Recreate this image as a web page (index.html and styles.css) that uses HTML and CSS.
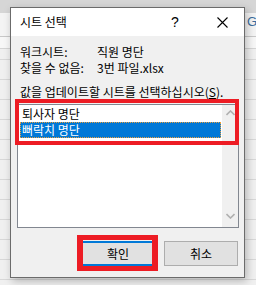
FILE: index.html
```html
<!DOCTYPE html>
<html>
<head>
    <title>시트 선택</title>
    <link rel="stylesheet" href="styles.css">
</head>
<body>
    <div class="sheet-col">G</div>
    <div class="dialog">
        <div class="title-bar">
            <span class="title">시트 선택</span>
            <span class="help">?</span>
            <span class="close">
                <svg width="11" height="11" viewBox="0 0 11 11"><path d="M0.5 0.5L10.5 10.5M10.5 0.5L0.5 10.5" stroke="#000" stroke-width="1.1" fill="none"/></svg>
            </span>
        </div>
        <div class="content">
            <div class="info">
                <span>워크시트:</span><span>직원 명단</span>
                <span>찾을 수 없음:</span><span>3번 파일.xlsx</span>
            </div>
            <div class="prompt">값을 업데이트할 시트를 선택하십시오(<u>S</u>).</div>
            <div class="list-area">
                <div class="list">
                    <ul class="items">
                        <li class="item">퇴사자 명단</li>
                        <li class="item selected">뻐락치 명단</li>
                    </ul>
                    <div class="scrollbar">
                        <svg width="9" height="6" viewBox="0 0 9 6"><path d="M0.5 5L4.5 1L8.5 5" stroke="#b0b0b0" stroke-width="1.6" fill="none"/></svg>
                        <svg width="9" height="6" viewBox="0 0 9 6"><path d="M0.5 1L4.5 5L8.5 1" stroke="#b0b0b0" stroke-width="1.6" fill="none"/></svg>
                    </div>
                </div>
                <div class="mark list-mark"></div>
            </div>
            <div class="buttons">
                <div class="ok-wrap">
                    <button class="btn btn-default">확인</button>
                    <div class="mark ok-mark"></div>
                </div>
                <button class="btn">취소</button>
            </div>
        </div>
    </div>
</body>
</html>
```

FILE: styles.css
```css
body {
    margin: 0;
    width: 256px;
    height: 285px;
    overflow: hidden;
    position: relative;
    font-family: "Noto Sans CJK KR", "Noto Sans", sans-serif;
    font-size: 12px;
    color: #000000;
    background:
        linear-gradient(#d6d6d6 0, #d6d6d6 13px, #f4f4f4 13px, #f4f4f4 36px, #c8c8c8 36px, #c8c8c8 37px, #f7f7f7 37px, #f7f7f7 48px, #d4d4d4 48px, #d4d4d4 49px, transparent 49px),
        repeating-linear-gradient(#f0f0f0 0, #f0f0f0 19px, #d8d8d8 19px, #d8d8d8 20px);
}
.sheet-col {
    position: absolute;
    left: 247px;
    top: 14px;
    color: #3b6e9e;
    font-family: "Liberation Sans", sans-serif;
    font-size: 13px;
}
.dialog {
    position: relative;
    margin: 7px 0 0 10px;
    width: 233px;
    height: 269px;
    border: 1px solid #6b6b6b;
    background-color: #f0f0f0;
    box-shadow: 2px 3px 8px rgba(0, 0, 0, 0.25);
}
.title-bar {
    height: 28px;
    background-color: #ffffff;
    display: flex;
    align-items: center;
}
.title {
    flex: 1;
    padding-left: 9px;
    line-height: 16px;
}
.help {
    width: 8px;
    margin-right: 38px;
    font-family: "Liberation Sans", sans-serif;
    font-size: 14px;
    line-height: 16px;
}
.close {
    display: flex;
    margin-right: 16px;
    margin-top: 1px;
}
.content {
    padding: 8px 5px 0 6px;
}
.info {
    display: grid;
    grid-template-columns: 77px auto;
    line-height: 16px;
    padding-left: 3px;
}
.prompt {
    margin-top: 8px;
    padding-left: 3px;
    line-height: 16px;
    white-space: nowrap;
}
.list-area {
    position: relative;
    margin-top: 4px;
}
.list {
    height: 122px;
    border: 1px solid #828790;
    background-color: #ffffff;
    display: flex;
}
.items {
    flex: 1;
    margin: 0;
    padding: 1px 1px 0 3px;
    list-style-type: none;
}
.item {
    height: 14px;
    line-height: 14px;
    padding-left: 1px;
    white-space: nowrap;
    border: 1px dotted transparent;
    margin-left: -1px;
}
.selected {
    background-color: #0078d7;
    color: #ffffff;
    border-color: #e8a040;
}
.scrollbar {
    width: 16px;
    background-color: #f0f0f0;
    display: flex;
    flex-direction: column;
    justify-content: space-between;
    align-items: center;
    padding: 5px 0 8px;
}
.mark {
    position: absolute;
    border: 4px solid #ed1c24;
}
.list-mark {
    left: -2px;
    top: -5px;
    width: 216px;
    height: 38px;
}
.buttons {
    display: flex;
    justify-content: flex-end;
    gap: 9px;
    margin-top: 13px;
    padding-right: 1px;
}
.ok-wrap {
    position: relative;
}
.btn {
    width: 74px;
    height: 25px;
    margin: 0;
    padding: 0;
    border: 1px solid #adadad;
    background-color: #e1e1e1;
    font-family: "Noto Sans CJK KR", "Noto Sans", sans-serif;
    font-size: 12px;
    line-height: 16px;
    color: #000000;
}
.btn-default {
    border: 2px solid #0078d7;
}
.ok-mark {
    left: -4px;
    top: -6px;
    width: 69px;
    height: 26px;
    border-width: 5px 6px;
}
```
